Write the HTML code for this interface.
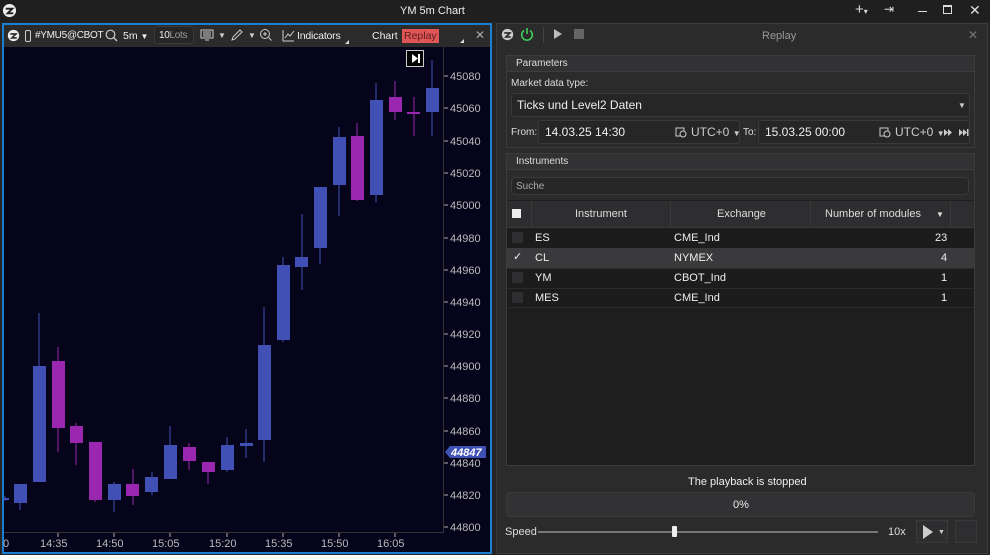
<!DOCTYPE html>
<html><head><meta charset="utf-8"><style>
*{box-sizing:border-box;margin:0;padding:0}
body{width:990px;height:555px;background:#252526;font-family:"Liberation Sans",sans-serif;color:#ddd;font-size:11px;position:relative;overflow:hidden}
.a{position:absolute}
.t{position:absolute;white-space:nowrap}
</style></head><body>
<!-- title bar -->
<div class="a" style="left:0;top:0;width:990px;height:22px;background:#1f1f1f"></div>
<svg class="a" style="left:2px;top:3px" width="15" height="15" viewBox="0 0 16 16"><circle cx="8" cy="8" r="7" fill="#eee"/><path d="M4 6h7l-5 5h6" stroke="#1f1f1f" stroke-width="2" fill="none"/></svg>
<div class="t" style="left:400px;top:5px;font-size:11px;color:#eee">YM 5m Chart</div>
<div class="t" style="left:855px;top:1px;font-size:15px;color:#ddd">+<span style="font-size:8px">▾</span></div>
<div class="t" style="left:884px;top:2px;font-size:12px;color:#ddd">⇥</div>
<div class="a" style="left:918px;top:11px;width:9px;height:1px;background:#ddd"></div>
<div class="a" style="left:943px;top:5px;width:9px;height:9px;border:1px solid #ddd;border-top-width:2px"></div>
<div class="t" style="left:969px;top:2px;font-size:14px;color:#ddd">✕</div>

<!-- left panel -->
<div class="a" style="left:2px;top:23px;width:490px;height:531px;border:2px solid #1a7fd0;background:#2a2a2b"></div>
<div class="a" style="left:4px;top:25px;width:486px;height:22px;background:#2b2b2c"></div>
<svg class="a" style="left:7px;top:29px" width="13" height="13" viewBox="0 0 16 16"><circle cx="8" cy="8" r="7" fill="#eee"/><path d="M4 6h7l-5 5h6" stroke="#2b2b2c" stroke-width="2" fill="none"/></svg>
<div class="a" style="left:25px;top:30px;width:6px;height:12px;border:1px solid #ccc;border-radius:2px"></div>
<div class="t" style="left:35px;top:30px;font-size:10px;color:#eee;letter-spacing:-0.3px">#YMU5@CBOT</div>
<svg class="a" style="left:105px;top:29px" width="13" height="13"><circle cx="5.5" cy="5.5" r="4.3" stroke="#ccc" fill="none" stroke-width="1.2"/><path d="M8.5 8.5l3.5 3.5" stroke="#ccc" stroke-width="1.3"/></svg>
<div class="t" style="left:123px;top:30px;font-size:10.5px;color:#eee">5m <span style="font-size:8px">▼</span></div>
<div class="a" style="left:154px;top:26px;width:40px;height:18px;border:1px solid #3a3a3a;border-radius:3px;background:#262627"></div>
<div class="t" style="left:159px;top:30px;font-size:10px;color:#eee;letter-spacing:-0.3px">10<span style="color:#999">Lots</span></div>
<svg class="a" style="left:200px;top:29px" width="14" height="13"><rect x="1" y="1" width="12" height="8" stroke="#ccc" fill="none"/><path d="M3 3h8M3 5h8M3 7h8M5 11h4" stroke="#ccc"/></svg>
<div class="t" style="left:218px;top:31px;font-size:8px;color:#ccc">▼</div>
<svg class="a" style="left:230px;top:28px" width="14" height="14"><path d="M2 12l1-3 7-7 2 2-7 7z" stroke="#ccc" fill="none"/></svg>
<div class="t" style="left:248px;top:31px;font-size:8px;color:#ccc">▼</div>
<svg class="a" style="left:259px;top:28px" width="14" height="14"><circle cx="6" cy="6" r="4.5" stroke="#ccc" fill="none"/><path d="M9.5 9.5l3 3M4 6h4M6 4v4" stroke="#ccc"/></svg>
<svg class="a" style="left:282px;top:29px" width="13" height="13"><path d="M1 1v11h11M3 9l3-4 2 2 4-5" stroke="#ccc" fill="none"/></svg>
<div class="t" style="left:297px;top:30px;font-size:10.5px;color:#eee;letter-spacing:-0.2px">Indicators</div>
<div class="a" style="left:345px;top:40px;width:0;height:0;border-left:4px solid transparent;border-bottom:4px solid #ddd"></div>
<div class="t" style="left:372px;top:30px;font-size:10.5px;color:#eee">Chart</div>
<div class="a" style="left:402px;top:29px;width:37px;height:14px;background:#e05656"></div>
<div class="t" style="left:404px;top:30px;font-size:10.5px;color:#5a1c1c">Replay</div>
<div class="a" style="left:460px;top:39px;width:0;height:0;border-left:4px solid transparent;border-bottom:4px solid #ddd"></div>
<div class="t" style="left:475px;top:28px;font-size:12px;color:#aaa">✕</div>

<!-- chart -->
<div class="a" style="left:4px;top:47px;width:486px;height:505px;background:#05041a"></div>
<div class="a" style="left:443px;top:47px;width:1px;height:486px;background:#333"></div>
<div class="a" style="left:4px;top:532px;width:440px;height:1px;background:#333"></div>
<div class="a" style="left:406px;top:50px;width:18px;height:17px;border:1px solid #ccc;background:#000"></div>
<svg class="a" style="left:407px;top:51px" width="16" height="15"><path d="M5 3l6 4.5-6 4.5z" fill="#fff"/><rect x="11" y="3" width="2" height="9" fill="#fff"/></svg>
<svg class="a" style="left:0;top:0" width="990" height="555">
<g stroke-width="1">
<line x1="5" y1="496" x2="5" y2="501" stroke="#4050b5"/><rect x="3" y="498" width="6" height="2" fill="#4050b5"/>
<line x1="20" y1="484" x2="20" y2="510" stroke="#4050b5"/><rect x="14" y="484" width="13" height="19" fill="#4050b5"/>
<line x1="39" y1="313" x2="39" y2="482" stroke="#4050b5"/><rect x="33" y="366" width="13" height="116" fill="#4050b5"/>
<line x1="58" y1="347" x2="58" y2="452" stroke="#9b27b0"/><rect x="52" y="361" width="13" height="67" fill="#9b27b0"/>
<line x1="76" y1="423" x2="76" y2="465" stroke="#9b27b0"/><rect x="70" y="426" width="13" height="17" fill="#9b27b0"/>
<line x1="95" y1="442" x2="95" y2="502" stroke="#9b27b0"/><rect x="89" y="442" width="13" height="58" fill="#9b27b0"/>
<line x1="114" y1="482" x2="114" y2="512" stroke="#4050b5"/><rect x="108" y="484" width="13" height="16" fill="#4050b5"/>
<line x1="133" y1="469" x2="133" y2="505" stroke="#9b27b0"/><rect x="126" y="484" width="13" height="12" fill="#9b27b0"/>
<line x1="152" y1="472" x2="152" y2="495" stroke="#4050b5"/><rect x="145" y="477" width="13" height="15" fill="#4050b5"/>
<line x1="170" y1="426" x2="170" y2="479" stroke="#4050b5"/><rect x="164" y="445" width="13" height="34" fill="#4050b5"/>
<line x1="189" y1="443" x2="189" y2="470" stroke="#9b27b0"/><rect x="183" y="447" width="13" height="14" fill="#9b27b0"/>
<line x1="208" y1="462" x2="208" y2="484" stroke="#9b27b0"/><rect x="202" y="462" width="13" height="10" fill="#9b27b0"/>
<line x1="227" y1="437" x2="227" y2="472" stroke="#4050b5"/><rect x="221" y="445" width="13" height="25" fill="#4050b5"/>
<line x1="246" y1="429" x2="246" y2="458" stroke="#4050b5"/><rect x="240" y="443" width="13" height="3" fill="#4050b5"/>
<line x1="264" y1="307" x2="264" y2="462" stroke="#4050b5"/><rect x="258" y="345" width="13" height="95" fill="#4050b5"/>
<line x1="283" y1="257" x2="283" y2="342" stroke="#4050b5"/><rect x="277" y="265" width="13" height="75" fill="#4050b5"/>
<line x1="302" y1="214" x2="302" y2="290" stroke="#4050b5"/><rect x="295" y="257" width="13" height="10" fill="#4050b5"/>
<line x1="320" y1="187" x2="320" y2="264" stroke="#4050b5"/><rect x="314" y="187" width="13" height="61" fill="#4050b5"/>
<line x1="339" y1="127" x2="339" y2="216" stroke="#4050b5"/><rect x="333" y="137" width="13" height="48" fill="#4050b5"/>
<line x1="357" y1="123" x2="357" y2="201" stroke="#9b27b0"/><rect x="351" y="136" width="13" height="64" fill="#9b27b0"/>
<line x1="376" y1="83" x2="376" y2="202" stroke="#4050b5"/><rect x="370" y="100" width="13" height="95" fill="#4050b5"/>
<line x1="395" y1="81" x2="395" y2="120" stroke="#9b27b0"/><rect x="389" y="97" width="13" height="15" fill="#9b27b0"/>
<line x1="414" y1="97" x2="414" y2="136" stroke="#9b27b0"/><rect x="407" y="112" width="13" height="2" fill="#9b27b0"/>
<line x1="432" y1="60" x2="432" y2="136" stroke="#4050b5"/><rect x="426" y="88" width="13" height="24" fill="#4050b5"/>
</g>
<g stroke="#aaa"><line x1="444" y1="76" x2="448" y2="76"/><line x1="444" y1="108" x2="448" y2="108"/><line x1="444" y1="141" x2="448" y2="141"/><line x1="444" y1="173" x2="448" y2="173"/><line x1="444" y1="205" x2="448" y2="205"/><line x1="444" y1="238" x2="448" y2="238"/><line x1="444" y1="270" x2="448" y2="270"/><line x1="444" y1="302" x2="448" y2="302"/><line x1="444" y1="334" x2="448" y2="334"/><line x1="444" y1="366" x2="448" y2="366"/><line x1="444" y1="398" x2="448" y2="398"/><line x1="444" y1="431" x2="448" y2="431"/><line x1="444" y1="463" x2="448" y2="463"/><line x1="444" y1="495" x2="448" y2="495"/><line x1="444" y1="527" x2="448" y2="527"/>
<line x1="58" y1="533" x2="58" y2="537"/><line x1="114" y1="533" x2="114" y2="537"/><line x1="170" y1="533" x2="170" y2="537"/><line x1="227" y1="533" x2="227" y2="537"/><line x1="283" y1="533" x2="283" y2="537"/><line x1="339" y1="533" x2="339" y2="537"/><line x1="395" y1="533" x2="395" y2="537"/></g>
<g fill="#bbb" font-family="Liberation Sans" font-size="11">
<text x="450" y="80">45080</text><text x="450" y="112">45060</text><text x="450" y="145">45040</text><text x="450" y="177">45020</text><text x="450" y="209">45000</text><text x="450" y="242">44980</text><text x="450" y="274">44960</text><text x="450" y="306">44940</text><text x="450" y="338">44920</text><text x="450" y="370">44900</text><text x="450" y="402">44880</text><text x="450" y="435">44860</text><text x="450" y="467">44840</text><text x="450" y="499">44820</text><text x="450" y="531">44800</text>
<text x="40" y="547">14:35</text><text x="96" y="547">14:50</text><text x="152" y="547">15:05</text><text x="209" y="547">15:20</text><text x="265" y="547">15:35</text><text x="321" y="547">15:50</text><text x="377" y="547">16:05</text><text x="3" y="547">0</text>
</g>
<path d="M445 452l5-6h36v12h-36z" fill="#3f51b5"/>
<text x="451" y="456" fill="#fff" font-family="Liberation Sans" font-size="11" font-weight="bold" font-style="italic">44847</text>
</svg>

<!-- right panel -->
<div class="a" style="left:496px;top:23px;width:492px;height:531px;border:1px solid #3a3a3a;background:#2b2b2c"></div>
<svg class="a" style="left:501px;top:28px" width="13" height="13" viewBox="0 0 16 16"><circle cx="8" cy="8" r="7" fill="#ccc"/><path d="M4 6h7l-5 5h6" stroke="#2b2b2c" stroke-width="2" fill="none"/></svg>
<svg class="a" style="left:520px;top:27px" width="14" height="14"><path d="M4 3.5a5.3 5.3 0 1 0 6 0" stroke="#3fcf5a" stroke-width="1.6" fill="none"/><path d="M7 1v6" stroke="#3fcf5a" stroke-width="1.6"/></svg>
<div class="a" style="left:543px;top:27px;width:1px;height:16px;background:#444"></div>
<div class="a" style="left:554px;top:29px;width:0;height:0;border-top:5px solid transparent;border-bottom:5px solid transparent;border-left:8px solid #bbb"></div>
<div class="a" style="left:574px;top:29px;width:10px;height:10px;background:#666"></div>
<div class="t" style="left:762px;top:30px;font-size:11px;color:#999">Replay</div>
<div class="t" style="left:968px;top:28px;font-size:12px;color:#777">✕</div>

<div class="a" style="left:506px;top:55px;width:469px;height:93px;border:1px solid #3c3c3c;background:#2b2b2c"></div>
<div class="a" style="left:507px;top:56px;width:467px;height:16px;background:#323234;border-bottom:1px solid #3c3c3c"></div>
<div class="t" style="left:516px;top:58px;font-size:10px;color:#ddd">Parameters</div>
<div class="t" style="left:511px;top:78px;font-size:10px;color:#ddd">Market data type:</div>
<div class="a" style="left:511px;top:93px;width:459px;height:24px;border:1px solid #3a3a3a;border-radius:3px;background:#262627"></div>
<div class="t" style="left:517px;top:98px;font-size:12px;color:#eee">Ticks und Level2 Daten</div>
<div class="t" style="left:958px;top:101px;font-size:8px;color:#ccc">▼</div>
<div class="t" style="left:511px;top:127px;font-size:10px;color:#ddd">From:</div>
<div class="a" style="left:538px;top:120px;width:202px;height:24px;border:1px solid #3a3a3a;border-radius:3px;background:#262627"></div>
<div class="t" style="left:545px;top:125px;font-size:12px;color:#eee">14.03.25 14:30</div>
<svg class="a" style="left:675px;top:126px" width="12" height="12"><rect x="1" y="2" width="8" height="8" stroke="#ccc" fill="none"/><circle cx="8" cy="8" r="3" stroke="#ccc" fill="#262627"/></svg>
<div class="t" style="left:691px;top:125px;font-size:12px;color:#ccc">UTC+0 <span style="font-size:8px">▼</span></div>
<div class="t" style="left:743px;top:127px;font-size:10px;color:#ddd">To:</div>
<div class="a" style="left:758px;top:120px;width:212px;height:24px;border:1px solid #3a3a3a;border-radius:3px;background:#262627"></div>
<div class="t" style="left:765px;top:125px;font-size:12px;color:#eee">15.03.25 00:00</div>
<svg class="a" style="left:879px;top:126px" width="12" height="12"><rect x="1" y="2" width="8" height="8" stroke="#ccc" fill="none"/><circle cx="8" cy="8" r="3" stroke="#ccc" fill="#262627"/></svg>
<div class="t" style="left:895px;top:125px;font-size:12px;color:#ccc">UTC+0 <span style="font-size:8px">▼</span></div>
<svg class="a" style="left:944px;top:128px" width="26" height="9"><path d="M0 1l4 3.5-4 3.5zM4 1l4 3.5-4 3.5zM15 1l4 3.5-4 3.5zM19 1l4 3.5-4 3.5z" fill="#ccc"/><rect x="23" y="1" width="1.5" height="7" fill="#ccc"/></svg>

<div class="a" style="left:506px;top:153px;width:469px;height:313px;border:1px solid #3c3c3c;background:#1e1e1f"></div>
<div class="a" style="left:507px;top:154px;width:467px;height:46px;background:#2b2b2c"></div>
<div class="a" style="left:507px;top:154px;width:467px;height:16px;background:#323234;border-bottom:1px solid #3c3c3c"></div>
<div class="t" style="left:516px;top:156px;font-size:10px;color:#ddd">Instruments</div>
<div class="a" style="left:511px;top:177px;width:458px;height:18px;border:1px solid #3a3a3a;border-radius:4px;background:#262627"></div>
<div class="t" style="left:516px;top:181px;font-size:10px;color:#aaa">Suche</div>
<div class="a" style="left:507px;top:201px;width:467px;height:27px;background:#2e2e30;border-bottom:1px solid #3a3a3a"></div>
<div class="a" style="left:531px;top:201px;width:1px;height:27px;background:#3a3a3a"></div>
<div class="a" style="left:670px;top:201px;width:1px;height:27px;background:#3a3a3a"></div>
<div class="a" style="left:810px;top:201px;width:1px;height:27px;background:#3a3a3a"></div>
<div class="a" style="left:950px;top:201px;width:1px;height:27px;background:#3a3a3a"></div>
<div class="a" style="left:512px;top:209px;width:9px;height:9px;background:#eee"></div>
<div class="t" style="left:575px;top:208px;font-size:11px;color:#ddd">Instrument</div>
<div class="t" style="left:717px;top:208px;font-size:11px;color:#ddd">Exchange</div>
<div class="t" style="left:825px;top:208px;font-size:11px;color:#ddd">Number of modules</div>
<div class="t" style="left:936px;top:210px;font-size:8px;color:#ddd">▼</div>

<div class="a" style="left:507px;top:229px;width:467px;height:19px;background:#1c1c1d"></div>
<div class="a" style="left:507px;top:248px;width:467px;height:20px;background:#3a3a3c"></div>
<div class="a" style="left:507px;top:268px;width:467px;height:20px;background:#1c1c1d;border-top:1px solid #2a2a2a"></div>
<div class="a" style="left:507px;top:288px;width:467px;height:20px;background:#1c1c1d;border-top:1px solid #2a2a2a;border-bottom:1px solid #2a2a2a"></div>
<div class="a" style="left:512px;top:232px;width:11px;height:11px;background:#2e2e30"></div>
<div class="t" style="left:513px;top:250px;font-size:11px;color:#eee">✓</div>
<div class="a" style="left:512px;top:272px;width:11px;height:11px;background:#2e2e30"></div>
<div class="a" style="left:512px;top:292px;width:11px;height:11px;background:#2e2e30"></div>
<div class="t" style="left:535px;top:232px;font-size:11px;color:#eee">ES</div>
<div class="t" style="left:674px;top:232px;font-size:11px;color:#eee">CME_Ind</div>
<div class="t" style="left:935px;top:232px;font-size:11px;color:#eee">23</div>
<div class="t" style="left:535px;top:252px;font-size:11px;color:#eee">CL</div>
<div class="t" style="left:674px;top:252px;font-size:11px;color:#eee">NYMEX</div>
<div class="t" style="left:941px;top:252px;font-size:11px;color:#eee">4</div>
<div class="t" style="left:535px;top:272px;font-size:11px;color:#eee">YM</div>
<div class="t" style="left:674px;top:272px;font-size:11px;color:#eee">CBOT_Ind</div>
<div class="t" style="left:941px;top:272px;font-size:11px;color:#eee">1</div>
<div class="t" style="left:535px;top:292px;font-size:11px;color:#eee">MES</div>
<div class="t" style="left:674px;top:292px;font-size:11px;color:#eee">CME_Ind</div>
<div class="t" style="left:941px;top:292px;font-size:11px;color:#eee">1</div>

<div class="t" style="left:688px;top:476px;font-size:11px;color:#eee">The playback is stopped</div>
<div class="a" style="left:506px;top:492px;width:469px;height:25px;border:1px solid #3a3a3a;border-radius:4px;background:#323234"></div>
<div class="t" style="left:733px;top:499px;font-size:11px;color:#eee">0%</div>
<div class="t" style="left:505px;top:526px;font-size:11px;color:#ddd">Speed</div>
<div class="a" style="left:538px;top:531px;width:340px;height:2px;background:#777"></div>
<div class="a" style="left:672px;top:526px;width:5px;height:11px;background:#eee;border-radius:1px"></div>
<div class="t" style="left:888px;top:526px;font-size:11px;color:#ddd">10x</div>
<div class="a" style="left:916px;top:520px;width:32px;height:23px;border:1px solid #3a3a3a;background:#2e2e30"></div>
<div class="a" style="left:923px;top:525px;width:0;height:0;border-top:7px solid transparent;border-bottom:7px solid transparent;border-left:10px solid #ccc"></div>
<div class="t" style="left:938px;top:529px;font-size:7px;color:#ccc">▼</div>
<div class="a" style="left:955px;top:520px;width:22px;height:23px;border:1px solid #3a3a3a;background:#2e2e30"></div>
</body></html>
